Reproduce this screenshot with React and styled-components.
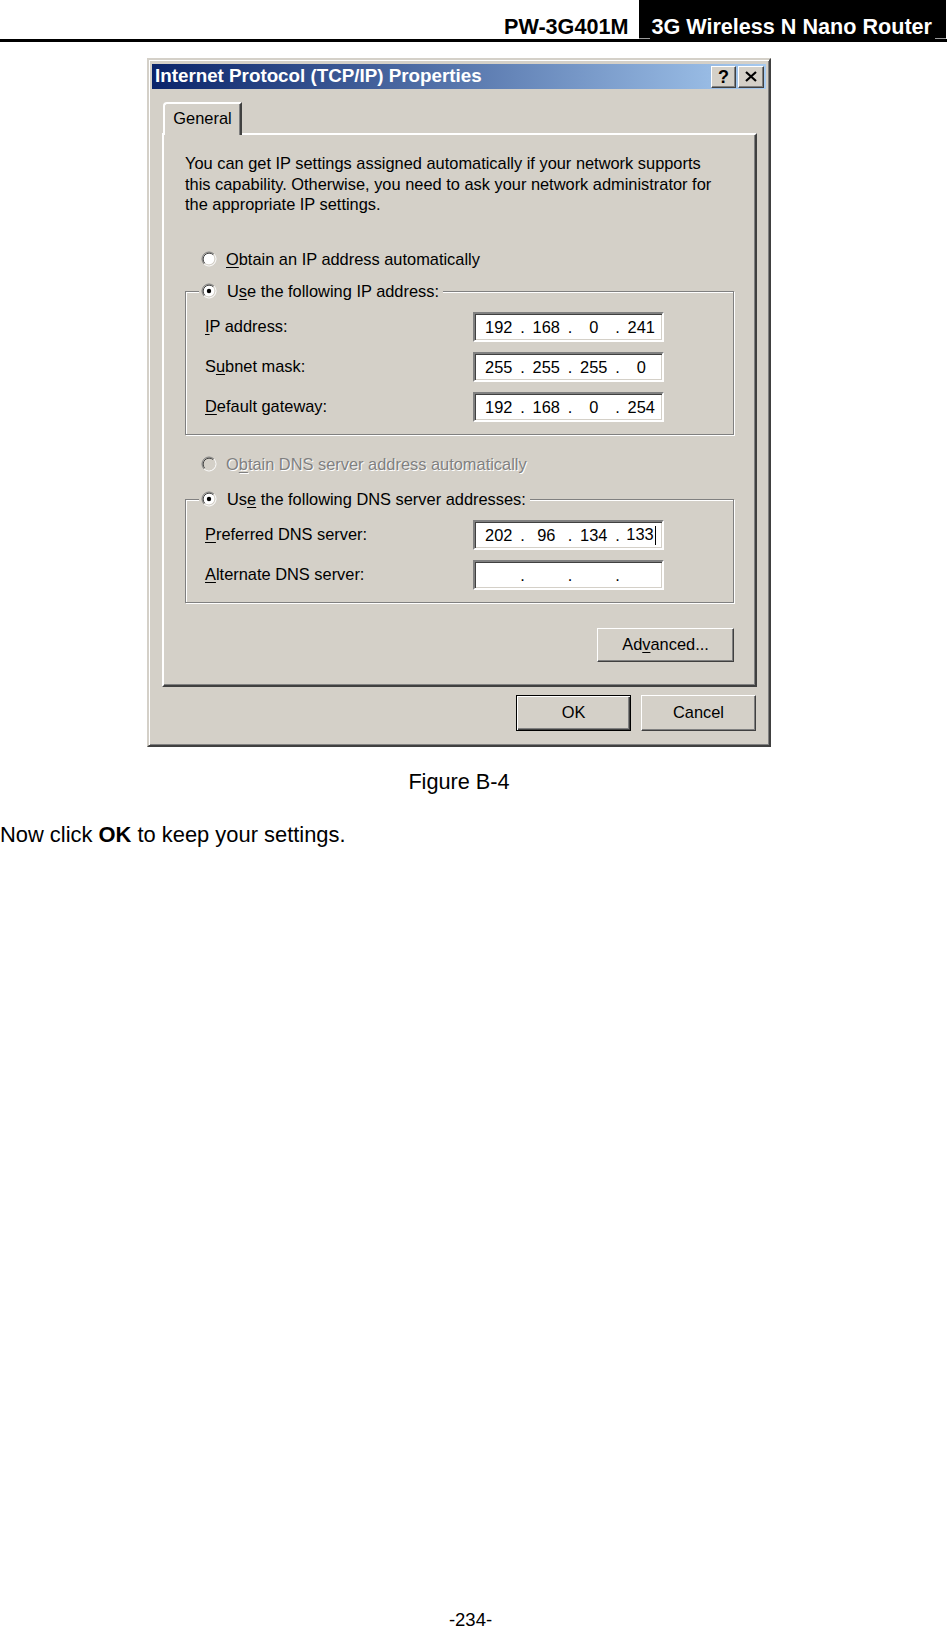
import React from "react";
import styled, { createGlobalStyle } from "styled-components";

const GlobalStyle = createGlobalStyle`
  html, body {
    margin: 0;
    padding: 0;
    background: #fff;
    overflow: hidden;
  }
  body {
    font-family: "Liberation Sans", Arial, sans-serif;
    color: #000;
  }
`;

const FACE = "#d4d0c8";

const Page = styled.div`
  width: 947px;
  height: 1628px;
  display: flex;
  flex-direction: column;
`;

const Header = styled.header`
  display: flex;
  justify-content: flex-end;
  align-items: flex-end;
  height: 39px;
  padding-right: 1px;
  border-bottom: 3px solid #000;
  font-size: 21.6px;
  font-weight: bold;
  line-height: 24px;
`;

const Model = styled.div`
  padding: 0 11px 0 0;
`;

const Product = styled.div`
  position: relative;
  height: 39px;
  box-sizing: border-box;
  display: flex;
  align-items: flex-end;
  padding: 0 14px 0 12px;
  background: #000;
  color: #fff;

  &::before,
  &::after {
    content: "";
    position: absolute;
    bottom: 0;
    width: 11px;
    height: 1px;
    background: #9c9c9c;
  }
  &::before {
    left: 0;
  }
  &::after {
    right: 0;
  }
`;

const Figure = styled.figure`
  margin: 16px 0 0;
  width: 918px;
  display: flex;
  flex-direction: column;
  align-items: center;
`;

const Caption = styled.figcaption`
  margin-top: 22px;
  font-size: 21.7px;
  line-height: 25px;
`;

const BodyText = styled.p`
  margin: 28px 0 0;
  font-size: 21.9px;
  line-height: 25px;
`;

const PageNumber = styled.footer`
  margin-top: auto;
  width: 941px;
  text-align: center;
  font-size: 18.5px;
  line-height: 16px;
`;

/* ---- dialog ---- */

const Dialog = styled.div`
  width: 624px;
  box-sizing: border-box;
  display: flex;
  flex-direction: column;
  padding: 4px 3px 3px;
  background: ${FACE};
  border: 2px solid;
  border-color: ${FACE} #404040 #404040 ${FACE};
  box-shadow: inset 1px 1px #fff, inset -1px -1px #808080;
  font-family: "Liberation Sans", Arial, sans-serif;
  font-size: 16.4px;
  line-height: 20.5px;
  text-align: left;
`;

const TitleBar = styled.div`
  height: 25px;
  display: flex;
  align-items: center;
  padding: 0 2px 0 3px;
  background: linear-gradient(to right, #0a246a, #a6caf0);
  color: #fff;
  font-size: 18.8px;
  font-weight: bold;
`;

const TitleButtons = styled.div`
  margin-left: auto;
  display: flex;
  gap: 2px;
`;

const CaptionButton = styled.div`
  width: ${(p) => p.$w}px;
  height: 22px;
  box-sizing: border-box;
  display: flex;
  align-items: center;
  justify-content: center;
  background: ${FACE};
  border: 1px solid;
  border-color: #fff #404040 #404040 #fff;
  box-shadow: inset -1px -1px #808080;
  color: #000;
  font-size: 18px;
  font-weight: bold;
  line-height: 1;
`;

const DialogBody = styled.div`
  display: flex;
  flex-direction: column;
  padding: 13px 9px 11px 10px;
`;

const TabStrip = styled.div`
  display: flex;
  padding-left: 1px;
`;

const Tab = styled.div`
  position: relative;
  z-index: 1;
  width: 79px;
  height: 33px;
  box-sizing: border-box;
  margin-bottom: -2px;
  display: flex;
  align-items: center;
  justify-content: center;
  padding-bottom: 2px;
  background: ${FACE};
  border-top: 2px solid #fff;
  border-left: 2px solid #fff;
  border-right: 2px solid #404040;
  border-top-left-radius: 4px;
  box-shadow: inset -1px 0 #808080;
`;

const Panel = styled.div`
  display: flex;
  flex-direction: column;
  padding: 18px 21px 23px;
  border: 2px solid;
  border-color: #fff #404040 #404040 #fff;
  box-shadow: inset -1px -1px #808080;
`;

const Intro = styled.p`
  margin: 0;
`;

const RadioRow = styled.div`
  display: flex;
  align-items: center;
  gap: 9px;
  height: 21px;
  margin: ${(p) => p.$top}px 0 0 16px;
  color: ${(p) => (p.$disabled ? "#808080" : "#000")};
  text-shadow: ${(p) => (p.$disabled ? "1px 1px #fff" : "none")};
`;

const Group = styled.fieldset`
  margin: ${(p) => p.$top}px 0 0;
  min-width: 0;
  display: flex;
  flex-direction: column;
  gap: 10px;
  padding: 10px 69px 12px 19px;
  border: 1px solid #808080;
  box-shadow: inset 1px 1px #fff, 1px 1px #fff;
`;

const GroupLegend = styled.legend`
  display: flex;
  align-items: center;
  gap: 10px;
  height: 21px;
  margin-left: -6px;
  padding: 0 4px 0 2px;
  background: ${FACE};
`;

const FieldRow = styled.div`
  display: flex;
  align-items: center;
  justify-content: space-between;
  height: 30px;
`;

const IpBox = styled.div`
  width: 191px;
  height: 30px;
  box-sizing: border-box;
  display: grid;
  grid-template-columns: 1fr 6px 1fr 6px 1fr 6px 1fr;
  align-items: center;
  padding: 0 0 0 3px;
  background: #fff;
  border: 2px solid;
  border-color: #808080 #fff #fff #808080;
  box-shadow: inset 1px 1px #404040, inset -1px -1px ${FACE};
  text-align: center;
  line-height: 20px;
`;

const Caret = styled.span`
  display: inline-block;
  width: 1.5px;
  height: 19px;
  margin-left: 1px;
  vertical-align: middle;
  background: #000;
`;

const PushButton = styled.div`
  width: ${(p) => p.$w}px;
  height: ${(p) => p.$h}px;
  box-sizing: border-box;
  display: flex;
  align-items: center;
  justify-content: center;
  background: ${FACE};
  border: 1px solid;
  border-color: ${(p) => (p.$default ? "#000" : "#fff #404040 #404040 #fff")};
  box-shadow: ${(p) =>
    p.$default
      ? "inset 1px 1px #fff, inset -1px -1px #404040, inset -2px -2px #808080"
      : `inset -1px -1px #808080, inset 1px 1px ${FACE}`};
`;

const AdvancedButton = styled(PushButton)`
  align-self: flex-end;
  margin-top: 25px;
`;

const ButtonBar = styled.div`
  display: flex;
  justify-content: flex-end;
  gap: 10px;
  margin-top: 8px;
  padding-right: 1px;
`;

const Key = styled.u`
  text-decoration-thickness: 1px;
  text-underline-offset: 2px;
`;

function RadioMark({ checked, disabled }) {
  return (
    <svg width="16" height="16" viewBox="0 0 16 16" style={{ flexShrink: 0 }}>
      <circle cx="8" cy="8" r="6" fill={disabled ? FACE : "#fff"} />
      <path d="M3.05 12.95 A7 7 0 0 1 12.95 3.05" stroke="#808080" strokeWidth="1" fill="none" />
      <path d="M12.95 3.05 A7 7 0 0 1 3.05 12.95" stroke="#fff" strokeWidth="1" fill="none" />
      <path d="M3.76 12.24 A6 6 0 0 1 12.24 3.76" stroke="#404040" strokeWidth="1" fill="none" />
      <path d="M12.24 3.76 A6 6 0 0 1 3.76 12.24" stroke={FACE} strokeWidth="1" fill="none" />
      {checked && <circle cx="8" cy="8" r="2.2" fill="#000" />}
    </svg>
  );
}

function IpField({ parts, caret }) {
  return (
    <IpBox>
      <span>{parts[0]}</span>
      <span>.</span>
      <span>{parts[1]}</span>
      <span>.</span>
      <span>{parts[2]}</span>
      <span>.</span>
      <span>
        {parts[3]}
        {caret && <Caret />}
      </span>
    </IpBox>
  );
}

export default function App() {
  return (
    <Page>
      <GlobalStyle />
      <Header>
        <Model>PW-3G401M</Model>
        <Product>3G Wireless N Nano Router</Product>
      </Header>

      <Figure>
        <Dialog>
          <TitleBar>
            Internet Protocol (TCP/IP) Properties
            <TitleButtons>
              <CaptionButton $w={25}>?</CaptionButton>
              <CaptionButton $w={26}>
                <svg width="12" height="11" viewBox="0 0 12 11">
                  <path d="M1 1 L11 10 M11 1 L1 10" stroke="#000" strokeWidth="2.2" />
                </svg>
              </CaptionButton>
            </TitleButtons>
          </TitleBar>

          <DialogBody>
            <TabStrip>
              <Tab>General</Tab>
            </TabStrip>
            <Panel>
              <Intro>
                You can get IP settings assigned automatically if your network supports
                <br />
                this capability. Otherwise, you need to ask your network administrator for
                <br />
                the appropriate IP settings.
              </Intro>

              <RadioRow $top={34}>
                <RadioMark />
                <span>
                  <Key>O</Key>btain an IP address automatically
                </span>
              </RadioRow>

              <Group $top={11}>
                <GroupLegend>
                  <RadioMark checked />
                  <span>
                    U<Key>s</Key>e the following IP address:
                  </span>
                </GroupLegend>
                <FieldRow>
                  <span>
                    <Key>I</Key>P address:
                  </span>
                  <IpField parts={["192", "168", "0", "241"]} />
                </FieldRow>
                <FieldRow>
                  <span>
                    S<Key>u</Key>bnet mask:
                  </span>
                  <IpField parts={["255", "255", "255", "0"]} />
                </FieldRow>
                <FieldRow>
                  <span>
                    <Key>D</Key>efault gateway:
                  </span>
                  <IpField parts={["192", "168", "0", "254"]} />
                </FieldRow>
              </Group>

              <RadioRow $top={19} $disabled>
                <RadioMark disabled />
                <span>
                  O<Key>b</Key>tain DNS server address automatically
                </span>
              </RadioRow>

              <Group $top={14}>
                <GroupLegend>
                  <RadioMark checked />
                  <span>
                    Us<Key>e</Key> the following DNS server addresses:
                  </span>
                </GroupLegend>
                <FieldRow>
                  <span>
                    <Key>P</Key>referred DNS server:
                  </span>
                  <IpField parts={["202", "96", "134", "133"]} caret />
                </FieldRow>
                <FieldRow>
                  <span>
                    <Key>A</Key>lternate DNS server:
                  </span>
                  <IpField parts={["", "", "", ""]} />
                </FieldRow>
              </Group>

              <AdvancedButton $w={137} $h={34}>
                <span>
                  Ad<Key>v</Key>anced...
                </span>
              </AdvancedButton>
            </Panel>

            <ButtonBar>
              <PushButton $w={115} $h={36} $default>
                OK
              </PushButton>
              <PushButton $w={115} $h={36}>
                Cancel
              </PushButton>
            </ButtonBar>
          </DialogBody>
        </Dialog>
        <Caption>Figure B-4</Caption>
      </Figure>

      <BodyText>
        Now click <b>OK</b> to keep your settings.
      </BodyText>

      <PageNumber>-234-</PageNumber>
    </Page>
  );
}
